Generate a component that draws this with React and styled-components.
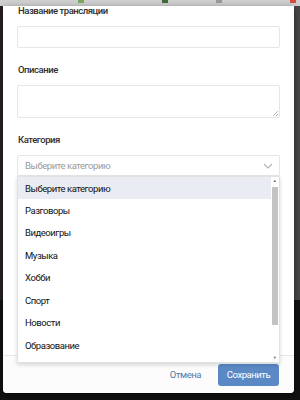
import React from 'react';
import styled, { createGlobalStyle } from 'styled-components';

const GlobalStyle = createGlobalStyle`
  html, body {
    margin: 0;
    padding: 0;
    background: #3a3a3a;
  }
  * {
    box-sizing: border-box;
  }
`;

const categories = [
  'Выберите категорию',
  'Разговоры',
  'Видеоигры',
  'Музыка',
  'Хобби',
  'Спорт',
  'Новости',
  'Образование',
];

const App = () => {
  return (
    <>
      <GlobalStyle />
      <Page>
        <TopBar>
          <Dot color="#7aa85a" style={{ marginLeft: 78 }} />
          <Dot color="#3e6b3a" style={{ marginLeft: 78 }} />
          <Dot color="#9a9a9a" style={{ marginLeft: 48 }} />
          <Dot color="#d84a3c" style={{ marginLeft: 'auto' }} />
        </TopBar>
        <Modal>
          <ModalBody>
            <Field>
              <Label>Название трансляции</Label>
              <Input />
            </Field>
            <Field>
              <Label>Описание</Label>
              <TextArea>
                <ResizeGrip width="6" height="6" viewBox="0 0 6 6">
                  <path d="M1 6 L6 1 M4 6 L6 4" stroke="#aaa" strokeWidth="0.8" />
                </ResizeGrip>
              </TextArea>
            </Field>
            <Field>
              <Label>Категория</Label>
              <SelectWrap>
                <Select>
                  <Placeholder>Выберите категорию</Placeholder>
                  <svg width="10" height="6" viewBox="0 0 10 6">
                    <path d="M1 1 L5 5 L9 1" fill="none" stroke="#b5b5b5" strokeWidth="1.2" />
                  </svg>
                </Select>
                <Dropdown>
                  <Options>
                    {categories.map((c, i) => (
                      <Option key={c} active={i === 0}>
                        {c}
                      </Option>
                    ))}
                  </Options>
                  <ScrollTrack>
                    <Arrow>▲</Arrow>
                    <Thumb />
                    <Arrow>▼</Arrow>
                  </ScrollTrack>
                </Dropdown>
              </SelectWrap>
            </Field>
          </ModalBody>
          <Footer>
            <CancelButton>Отмена</CancelButton>
            <SaveButton>Сохранить</SaveButton>
          </Footer>
        </Modal>
      </Page>
    </>
  );
};

export default App;

const Page = styled.div`
  width: 300px;
  height: 400px;
  display: flex;
  flex-direction: column;
  background:
    linear-gradient(180deg, transparent 0, transparent 300px, #111 300px),
    linear-gradient(90deg, #2a2020 0, #2a2020 3px, #474747 3px);
  font-family: Roboto, 'Liberation Sans', sans-serif;
  letter-spacing: -0.45px;
  overflow: hidden;
`;

const TopBar = styled.div`
  height: 6px;
  flex-shrink: 0;
  display: flex;
  align-items: flex-start;
  background: #cfcfcf;
  padding-right: 4px;
`;

const Dot = styled.span`
  width: 6px;
  height: 3px;
  background: ${(p) => p.color};
`;

const Modal = styled.div`
  flex: 1;
  margin: 0 6px 7px 3px;
  display: flex;
  flex-direction: column;
  background: #fff;
  border-radius: 0 0 4px 4px;
  box-shadow: 0 2px 6px rgba(0, 0, 0, 0.5);
`;

const ModalBody = styled.div`
  flex: 1;
  padding: 0 14px;
  display: flex;
  flex-direction: column;
  gap: 17px;
`;

const Field = styled.div`
  display: flex;
  flex-direction: column;
  gap: 10px;
`;

const Label = styled.div`
  font-size: 9.5px;
  line-height: 10px;
  font-weight: 500;
  color: #2e2e2e;
  padding-left: 1px;
`;

const Input = styled.div`
  height: 22px;
  border: 1px solid #e6e6e6;
  border-radius: 2px;
`;

const TextArea = styled.div`
  height: 33px;
  border: 1px solid #e6e6e6;
  border-radius: 2px;
  display: flex;
  align-items: flex-end;
  justify-content: flex-end;
  padding: 1px;
`;

const ResizeGrip = styled.svg`
  display: block;
`;

const SelectWrap = styled.div`
  position: relative;
`;

const Select = styled.div`
  height: 21px;
  border: 1px solid #e6e6e6;
  border-radius: 2px 2px 0 0;
  display: flex;
  align-items: center;
  justify-content: space-between;
  padding: 0 6px 0 7px;
`;

const Placeholder = styled.span`
  font-size: 9.5px;
  color: #9a9a9a;
`;

const Dropdown = styled.div`
  position: absolute;
  left: 0;
  right: 0;
  top: 21px;
  height: 187px;
  display: flex;
  overflow: hidden;
  background: #fff;
  border: 1px solid #e2e2e2;
  box-shadow: 0 2px 4px rgba(0, 0, 0, 0.15);
  z-index: 2;
`;

const Options = styled.div`
  flex: 1;
  display: flex;
  flex-direction: column;
`;

const Option = styled.div`
  height: ${(p) => (p.active ? '22px' : '22.5px')};
  flex-shrink: 0;
  display: flex;
  align-items: center;
  padding-left: 7px;
  font-size: 9.5px;
  color: #111;
  background: ${(p) => (p.active ? '#e9edf3' : 'transparent')};
`;

const ScrollTrack = styled.div`
  width: 7px;
  display: flex;
  flex-direction: column;
  align-items: center;
  background: #fff;
  margin-right: 1px;
`;

const Arrow = styled.div`
  font-size: 4px;
  line-height: 8px;
  height: 8px;
  color: #666;
`;

const Thumb = styled.div`
  width: 6px;
  height: 138px;
  margin-top: 2px;
  margin-bottom: auto;
  background: #c3c3c3;
`;

const Footer = styled.div`
  height: 38px;
  flex-shrink: 0;
  border-top: 1px solid #e8e8e8;
  background: #fcfcfc;
  border-radius: 0 0 4px 4px;
  display: flex;
  align-items: center;
  justify-content: flex-end;
  gap: 17px;
  padding-right: 15px;
`;

const CancelButton = styled.button`
  border: none;
  background: none;
  padding: 0;
  font-family: inherit;
  letter-spacing: inherit;
  font-size: 9.5px;
  color: #5479a8;
  cursor: pointer;
`;

const SaveButton = styled.button`
  border: none;
  width: 61px;
  height: 22px;
  border-radius: 3px;
  background: #5a89c6;
  color: #fff;
  font-family: inherit;
  letter-spacing: inherit;
  font-size: 9.5px;
  cursor: pointer;
`;
